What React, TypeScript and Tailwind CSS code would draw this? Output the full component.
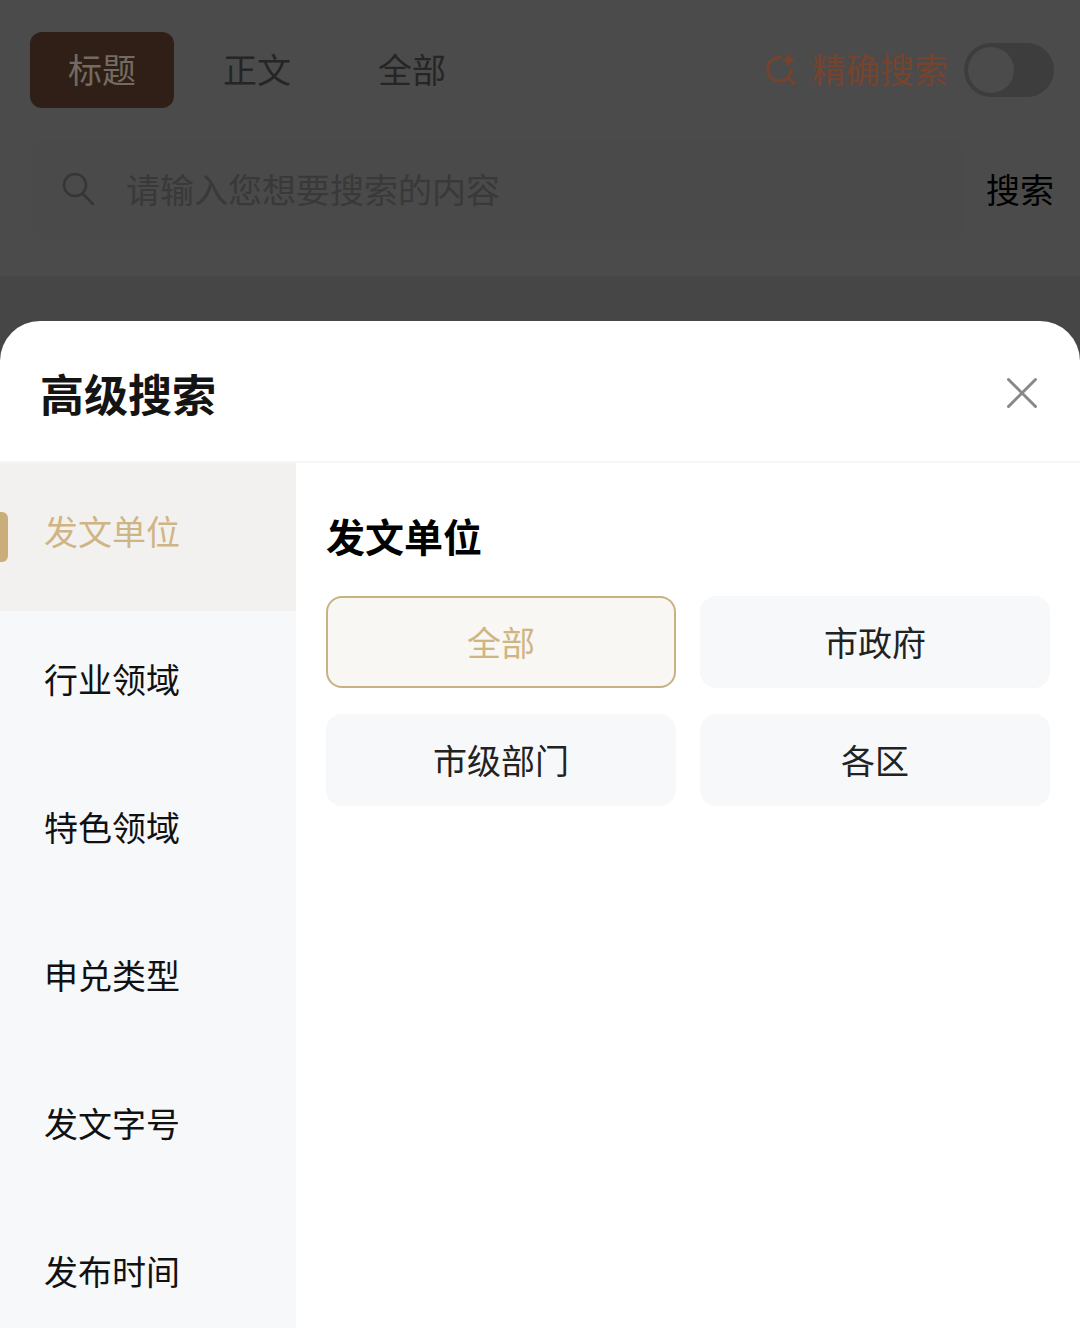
import React, { useState } from 'react'

interface FilterGroup {
  name: string
  options: string[]
}

const TABS = ['标题', '正文', '全部']

const FILTERS: FilterGroup[] = [
  { name: '发文单位', options: ['全部', '市政府', '市级部门', '各区'] },
  { name: '行业领域', options: ['全部'] },
  { name: '特色领域', options: ['全部'] },
  { name: '申兑类型', options: ['全部'] },
  { name: '发文字号', options: ['全部'] },
  { name: '发布时间', options: ['全部'] },
]

function SearchIcon() {
  return (
    <svg className="w-9 h-9 shrink-0" viewBox="0 0 36 36" fill="none" stroke="#363636" strokeWidth="2.5" strokeLinecap="round">
      <circle cx="15" cy="13" r="11" />
      <path d="M22.5 21.5L33 32" />
    </svg>
  )
}

function PreciseIcon() {
  return (
    <svg className="w-8 h-8 shrink-0" viewBox="0 0 32 32" fill="none" stroke="#78432d" strokeWidth="2.8" strokeLinecap="round">
      <path d="M16.5 3.5A11.8 11.8 0 1 0 27.3 15.5M24 24L30 29.5" />
      <path d="M24.5 0.5Q25.8 5 30 6.3Q25.8 7.6 24.5 12Q23.2 7.6 19 6.3Q23.2 5 24.5 0.5Z" fill="#78432d" strokeWidth="1" strokeLinejoin="round" />
    </svg>
  )
}

function CloseIcon() {
  return (
    <svg className="w-8 h-8" viewBox="0 0 32 32" fill="none" stroke="#888888" strokeWidth="3" strokeLinecap="round">
      <path d="M2.5 2.5L29.5 29.5M29.5 2.5L2.5 29.5" />
    </svg>
  )
}

// Dimmed search area behind the sheet
function SearchHeader() {
  const [tab, setTab] = useState(TABS[0])
  const [precise, setPrecise] = useState(false)

  return (
    <header className="bg-[#4b4b4b] pt-8 pb-9">
      <div className="flex items-center justify-between pl-[30px] pr-[26px]">
        <div className="flex items-center gap-[11px]">
          {TABS.map((name) => (
            <button
              key={name}
              type="button"
              onClick={() => setTab(name)}
              className={`h-[76px] px-[38px] pb-0.5 rounded-xl ${tab === name ? 'bg-[#2f1f16] text-[#736b61]' : 'text-[#252525]'}`}
            >
              {name}
            </button>
          ))}
        </div>
        <label className="flex items-center gap-4 text-[#78432d]">
          <PreciseIcon />
          <span className="pb-0.5">精确搜索</span>
          <input
            type="checkbox"
            role="switch"
            checked={precise}
            onChange={(e) => setPrecise(e.target.checked)}
            className="appearance-none w-[90px] h-[54px] rounded-full bg-[#3d3d3d] p-1 before:block before:size-[46px] before:rounded-full before:bg-[#4b4b4b] checked:before:ml-9"
          />
        </label>
      </div>
      <form className="flex items-center mt-8 pl-8 pr-[26px] gap-6" onSubmit={(e) => e.preventDefault()}>
        <label className="flex flex-1 items-center gap-[30px] h-[100px] px-7 rounded-xl bg-[#4a4a4a]">
          <SearchIcon />
          <input
            type="text"
            aria-label="搜索内容"
            placeholder="请输入您想要搜索的内容"
            className="flex-1 min-w-0 pb-0.5 bg-transparent outline-none text-[#252525] placeholder:text-[#393939]"
          />
        </label>
        <button type="submit" className="pb-0.5 text-black">搜索</button>
      </form>
    </header>
  )
}

export default function App() {
  const [active, setActive] = useState(0)
  const [selected, setSelected] = useState('全部')
  const group = FILTERS[active]

  return (
    <div className='min-h-screen flex flex-col bg-[#464646] text-[34px] leading-[50px] font-["Noto_Sans_CJK_SC",sans-serif]'>
      <SearchHeader />

      {/* Advanced search sheet */}
      <section className="flex flex-1 flex-col mt-[45px] rounded-t-[40px] bg-white overflow-hidden">
        <div className="flex items-center justify-between h-[142px] pt-1 pl-10 pr-[42px] border-b-2 border-[#f5f6f7]">
          <h2 className="text-[44px] leading-[64px] font-bold text-[#141414]">高级搜索</h2>
          <button type="button" aria-label="关闭">
            <CloseIcon />
          </button>
        </div>

        <div className="flex flex-1">
          <nav className="w-[296px] shrink-0 bg-[#f6f8fa]">
            {FILTERS.map((item, index) => (
              <button
                key={item.name}
                type="button"
                onClick={() => {
                  setActive(index)
                  setSelected('全部')
                }}
                className={`flex items-center w-full h-[148px] ${index === active ? 'bg-[#f3f1f0] text-[#cfb584]' : 'text-[#111111]'}`}
              >
                <span className={`w-2 h-[50px] rounded-r-md ${index === active ? 'bg-[#c9ae7c]' : ''}`} />
                <span className="pl-9 pb-3">{item.name}</span>
              </button>
            ))}
          </nav>

          <div className="flex-1 pt-11 px-[30px]">
            <h3 className="text-[39px] leading-[56px] font-bold text-black">{group.name}</h3>
            <div className="grid grid-cols-2 gap-x-6 gap-y-[26px] mt-[33px]">
              {group.options.map((option) => (
                <button
                  key={option}
                  type="button"
                  onClick={() => setSelected(option)}
                  className={`h-[92px] rounded-2xl ${
                    option === selected
                      ? 'border-2 border-[#c8b284] bg-[#f8f7f3] text-[#cfb584]'
                      : 'bg-[#f6f8fa] text-[#222222]'
                  }`}
                >
                  {option}
                </button>
              ))}
            </div>
          </div>
        </div>
      </section>
    </div>
  )
}
